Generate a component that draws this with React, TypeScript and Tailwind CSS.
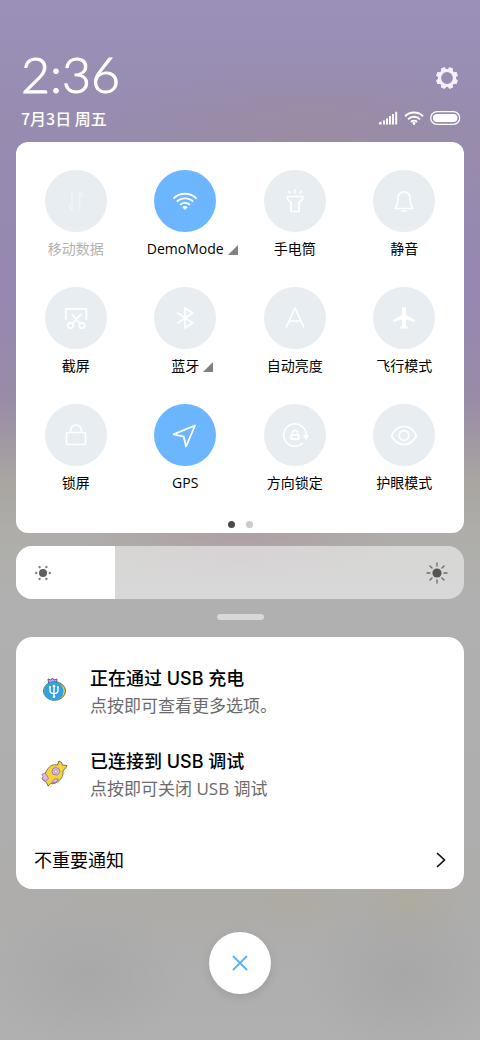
import React, { useState } from 'react';

interface Tile {
  id: string;
  label: string;
  icon: React.ReactNode;
  active?: boolean;
  disabled?: boolean;
  expandable?: boolean;
}

const Icon = ({ children, strokeWidth = 1.7 }: { children: React.ReactNode; strokeWidth?: number }) => (
  <svg
    width="30"
    height="30"
    viewBox="0 0 30 30"
    fill="none"
    stroke="#fff"
    strokeWidth={strokeWidth}
    strokeLinejoin="round"
    aria-hidden="true"
  >
    {children}
  </svg>
);

const TILES: Tile[] = [
  {
    id: 'data',
    label: '移动数据',
    disabled: true,
    icon: (
      <Icon strokeWidth={2.2}>
        <g opacity="0.35">
          <path d="M11 6v18l-3.500-4.500M18.500 24V6l3.500 4.500" />
        </g>
      </Icon>
    ),
  },
  {
    id: 'wifi',
    label: 'DemoMode',
    active: true,
    expandable: true,
    icon: (
      <Icon strokeWidth={1.8}>
        <path d="M3.500 12.500a16.300 16.300 0 0 1 23 0M6.800 15.700a11.600 11.600 0 0 1 16.400 0M10 18.900a7.100 7.100 0 0 1 10 0" />
        <path d="M12.300 21.300a3.800 3.800 0 0 1 5.400 0L15 24z" fill="#fff" stroke="none" />
      </Icon>
    ),
  },
  {
    id: 'torch',
    label: '手电筒',
    icon: (
      <Icon>
        <path d="M7.300 10.500h15.400v1.500c0 3-3.700 3-3.700 5.500v8h-8v-8c0-2.500-3.700-2.500-3.700-5.500zM15 3.500v4M8.500 5l2 2.500M21.500 5l-2 2.500" />
      </Icon>
    ),
  },
  {
    id: 'mute',
    label: '静音',
    icon: (
      <Icon>
        <path d="M6.200 22.500c1.800-2.500 2.600-4 2.600-7.500v-3a6.200 6.200 0 0 1 12.400 0v3c0 3.500.8 5 2.600 7.500zM12.300 25h5.400" />
      </Icon>
    ),
  },
  {
    id: 'screenshot',
    label: '截屏',
    icon: (
      <Icon>
        <path d="M4.800 17V5.800h20.600V17M10.500 11l8.500 9.500M20 11l-8.500 9.500" />
        <circle cx="9.500" cy="22.500" r="2.700" />
        <circle cx="21" cy="22.500" r="2.700" />
      </Icon>
    ),
  },
  {
    id: 'bluetooth',
    label: '蓝牙',
    expandable: true,
    icon: (
      <Icon>
        <path d="M7.500 9.800L22.500 20 15 25V5l7.500 5L7.500 20.200" />
      </Icon>
    ),
  },
  {
    id: 'brightness',
    label: '自动亮度',
    icon: (
      <Icon>
        <path d="M6 24.500L15 5l9 19.500M9 18h12" />
      </Icon>
    ),
  },
  {
    id: 'airplane',
    label: '飞行模式',
    icon: (
      <Icon>
        <path
          d="M15 4c1.300 0 2 1 2 2.300v5.500l8.700 5.200v2L17 16.500v6l1.800 1.700v1.400h-7.600v-1.400l1.800-1.700v-6L4.300 19v-2l8.700-5.200V6.300C13 5 13.700 4 15 4z"
          fill="#fff"
          stroke="none"
        />
      </Icon>
    ),
  },
  {
    id: 'lock',
    label: '锁屏',
    icon: (
      <Icon>
        <rect x="5.500" y="12.500" width="19" height="12" rx="1" />
        <path d="M9.500 12.500V10.500a5.500 5.500 0 0 1 11 0v2" />
      </Icon>
    ),
  },
  {
    id: 'gps',
    label: 'GPS',
    active: true,
    icon: (
      <Icon strokeWidth={1.8}>
        <path d="M25 5.500L3.500 14.300l10.300 2.400L16 26.500z" />
      </Icon>
    ),
  },
  {
    id: 'rotation',
    label: '方向锁定',
    icon: (
      <Icon strokeWidth={1.6}>
        <path d="M22.800 23a11.200 11.200 0 1 1 3.300-7" />
        <path d="M22.800 15h6.400L26 20z" fill="#fff" stroke="none" />
        <path d="M12.300 14.500v-1.300a2.700 2.700 0 0 1 5.400 0v1.300" />
        <path d="M10.300 14h9.400v6h-9.400zM12.300 16v2h5.400v-2z" fill="#fff" stroke="none" fillRule="evenodd" />
      </Icon>
    ),
  },
  {
    id: 'eye',
    label: '护眼模式',
    icon: (
      <Icon>
        <path d="M2.500 15.500C5.500 9.500 10 6.500 15 6.500s9.500 3 12.500 9c-3 6-7.500 9-12.500 9s-9.500-3-12.500-9z" />
        <circle cx="15" cy="15.500" r="4.800" />
      </Icon>
    ),
  },
];

const UsbChargeIcon = () => (
  <svg width="28" height="28" viewBox="0 0 28 28" aria-hidden="true">
    <path d="M8.500 7L8 3l3 1L12.500 2 14 4l3-1-.5 4z" fill="#c9a5dd" stroke="#54406b" strokeWidth="0.800" />
    <ellipse cx="14.500" cy="15" rx="11" ry="9.300" fill="#f0d34a" stroke="#5b5537" strokeWidth="0.900" />
    <ellipse cx="13.800" cy="15" rx="9.800" ry="9.500" fill="#2fa3e0" />
    <path
      d="M14 9.500V21M10 11v3.500c0 2 1.500 3 4 3s4-1 4-3V11"
      fill="none"
      stroke="#fff"
      strokeWidth="1.400"
    />
    <path d="M12.200 10.800L14 8.300l1.800 2.500zM9 12h2v-1.800H9zM17 12h2v-1.800h-2z" fill="#fff" />
    <circle cx="14" cy="20.700" r="1.300" fill="#fff" />
  </svg>
);

const UsbDebugIcon = () => (
  <svg width="28" height="28" viewBox="0 0 28 28" aria-hidden="true">
    <path
      d="M7 11c3-4.500 6.500-6 10.500-5L19 2l2.500 1.500 1 2.500 4.500.5-1.500 3-2.500 2c.5 4.500-1 8-5 11-2.500 2-5 2.500-7.500 2.200L8 27l-1.500-3.500L2 20l3-2.500c0-2.500.5-4.500 2-6.500z"
      fill="#f3d33f"
      stroke="#71643a"
      strokeWidth="0.900"
    />
    <path
      d="M1.800 15.500l3.200-1.500 2 2.500 1.500 3-3 2.500-3.500-2 1-2.500zM12 22.500l3.500-3 3 1-2.500 2.700-4 .8zM12 12.500l1-3 3-1 3 1.500 1 3-2.500 3-4.500-.5z"
      fill="#ddb8e5"
      stroke="#8b6493"
      strokeWidth="0.700"
    />
    <circle cx="15.800" cy="12.500" r="1.500" fill="#f9e8f6" stroke="#8b6493" strokeWidth="0.500" />
  </svg>
);

const NOTIFICATIONS = [
  { id: 'charge', title: '正在通过 USB 充电', text: '点按即可查看更多选项。', icon: <UsbChargeIcon /> },
  { id: 'debug', title: '已连接到 USB 调试', text: '点按即可关闭 USB 调试', icon: <UsbDebugIcon /> },
];

function StatusIcons() {
  return (
    <div className="flex items-center gap-1.5">
      <svg width="19" height="14" viewBox="0 0 19 14" fill="#fff" aria-hidden="true">
        <path d="M0 13.500v-2l2.500-1v3zM4 13.500v-4h2v4zM7 13.500V7.500h2v6zM10 13.500V5h2v8.500zM13 13.500V3h2v10.500zM16.200 13.500V.8h2v12.700z" />
      </svg>
      <svg width="20" height="14" viewBox="0 0 20 14" fill="none" stroke="#fff" strokeWidth="1.900" aria-hidden="true">
        <path d="M1 5.200a12.800 12.800 0 0 1 18 0M4 8.300a8.500 8.500 0 0 1 12 0M7 11a4.300 4.300 0 0 1 6 0" />
        <circle cx="10" cy="12.500" r="1.400" fill="#fff" stroke="none" />
      </svg>
      <svg width="31" height="14" viewBox="0 0 31 14" aria-hidden="true">
        <rect x="0.700" y="0.700" width="29" height="12.600" rx="6.300" fill="none" stroke="#fff" strokeWidth="1.300" />
        <rect x="3" y="3" width="24.400" height="8" rx="4" fill="#fff" />
      </svg>
    </div>
  );
}

function GearIcon() {
  return (
    <svg width="24" height="24" viewBox="-12 -12 24 24" fill="none" stroke="#f4f1f8" aria-hidden="true">
      <circle r="7.500" strokeWidth="3.200" />
      {[22.5, 67.5, 112.5, 157.5, 202.5, 247.5, 292.5, 337.5].map((a) => (
        <path
          key={a}
          d="M-2.300 -8L-1.500 -10.600H1.500L2.300 -8z"
          fill="#f4f1f8"
          strokeWidth="1"
          strokeLinejoin="round"
          transform={`rotate(${a})`}
        />
      ))}
    </svg>
  );
}

export default function App() {
  const [tiles, setTiles] = useState(TILES);
  const [brightness, setBrightness] = useState(22);

  const toggle = (id: string) =>
    setTiles((prev) => prev.map((t) => (t.id === id ? { ...t, active: !t.active } : t)));

  return (
    <main className="min-h-screen bg-[#b0b0b0] bg-[radial-gradient(ellipse_160px_50px_at_50%_530px,#b09ea4,transparent),radial-gradient(ellipse_100px_70px_at_18%_975px,#a8a8a8,transparent),radial-gradient(ellipse_100px_80px_at_84%_975px,#a7a7a8,transparent),radial-gradient(ellipse_60px_50px_at_85%_900px,#aeab9e,transparent),radial-gradient(ellipse_50px_30px_at_61%_902px,#aeaba0,transparent),radial-gradient(ellipse_320px_70px_at_45%_890px,#adaca7,transparent),radial-gradient(ellipse_220px_90px_at_65%_150px,#9a8da0,transparent),linear-gradient(#9b90b8_0px,#978bb0_130px,#9688b0_310px,#998ca6_400px,#a8a5a1_480px,#aeada9_530px,#b0b0b0_600px,#adadad_900px,#b0b0b0_1040px)] px-4 pb-[47px] font-['Open_Sans','Noto_Sans_CJK_SC',sans-serif] text-black">
      <header className="flex justify-between pt-[42px] pr-[3px] pl-[5px] text-white">
        <div>
          <time className="block h-16 font-['Lato',sans-serif] text-[50px] leading-[64px] font-light [-webkit-text-stroke:1px_white]">
            2:36
          </time>
          <p className="h-6 font-['Noto_Sans_CJK_SC',sans-serif] text-base leading-6 font-medium">7月3日 周五</p>
        </div>
        <div className="flex flex-col items-end justify-between pt-6 pb-[5px]">
          <button type="button" aria-label="设置" className="mr-0.5">
            <GearIcon />
          </button>
          <StatusIcons />
        </div>
      </header>

      <section className="mt-3 rounded-xl bg-white px-[5px] pt-7 pb-[5px]">
        <div className="grid grid-cols-4 gap-y-7">
          {tiles.map((t) => (
            <button
              key={t.id}
              type="button"
              disabled={t.disabled}
              aria-pressed={!!t.active}
              onClick={() => toggle(t.id)}
              className="flex flex-col items-center gap-[7px]"
            >
              <span
                className={
                  t.active
                    ? 'flex size-[62px] items-center justify-center rounded-full bg-[#6bb6ff]'
                    : 'flex size-[62px] items-center justify-center rounded-full bg-[#e7edf1]'
                }
              >
                {t.icon}
              </span>
              <span className={t.disabled ? 'text-sm text-[#b2b2b2]' : 'relative text-sm'}>
                {t.label}
                {t.expandable && (
                  <svg className="absolute top-1.5 left-full ml-1" width="10" height="10" viewBox="0 0 10 10" aria-hidden="true">
                    <path d="M10 0v10H0z" fill="#808080" />
                  </svg>
                )}
              </span>
            </button>
          ))}
        </div>
        <div className="mt-7 flex justify-center gap-[11px]">
          <span className="size-[7px] rounded-full bg-[#4c4c4c]" />
          <span className="size-[7px] rounded-full bg-[#cacaca]" />
        </div>
      </section>

      <label className="relative mt-[13px] flex h-[53px] items-center justify-between overflow-hidden rounded-2xl bg-white/50 px-4">
        <span className="absolute inset-y-0 left-0 bg-white" style={{ width: `${brightness}%` }} />
        <svg className="relative" width="22" height="22" viewBox="-11 -11 22 22" aria-hidden="true">
          <circle r="4" fill="#606060" />
          {[0, 60, 120, 180, 240, 300].map((a) => (
            <circle key={a} cx="6.800" r="1.200" fill="#808080" transform={`rotate(${a})`} />
          ))}
        </svg>
        <svg className="relative" width="22" height="22" viewBox="-11 -11 22 22" aria-hidden="true">
          <circle r="4.600" fill="#555" />
          {[0, 45, 90, 135, 180, 225, 270, 315].map((a) => (
            <path key={a} d="M7 0h3" stroke="#6c6c6c" strokeWidth="1.300" strokeLinecap="round" transform={`rotate(${a})`} />
          ))}
        </svg>
        <input
          type="range"
          min={0}
          max={100}
          value={brightness}
          onChange={(e) => setBrightness(Number(e.target.value))}
          aria-label="亮度"
          className="absolute inset-0 cursor-pointer opacity-0"
        />
      </label>

      <div className="mx-auto mt-[15px] h-1.5 w-[47px] rounded-sm bg-[#d8d8d8]" />

      <section className="mt-[17px] rounded-2xl bg-white pt-7">
        <ul className="flex flex-col gap-7">
          {NOTIFICATIONS.map((n) => (
            <li key={n.id} className="flex items-start gap-[22px] pt-px pl-6">
              <span className="pt-2.5">{n.icon}</span>
              <div>
                <h2 className="font-['Inter','Noto_Sans_CJK_SC',sans-serif] text-lg leading-[26px] font-medium">{n.title}</h2>
                <p className="text-[17px] leading-7 text-[#6b6b6b]">{n.text}</p>
              </div>
            </li>
          ))}
        </ul>
        <button type="button" className="mt-7 flex h-[58px] w-full items-center justify-between px-[18px] text-lg">
          不重要通知
          <svg width="10" height="16" viewBox="0 0 10 16" fill="none" stroke="#111" strokeWidth="1.700" aria-hidden="true">
            <path d="M1 1l7.500 7L1 15" />
          </svg>
        </button>
      </section>

      <button
        type="button"
        aria-label="清除全部"
        className="mx-auto mt-[43px] flex size-[62px] items-center justify-center rounded-full bg-white shadow-[0_3px_10px_rgba(0,0,0,0.1)]"
      >
        <svg width="16" height="16" viewBox="0 0 16 16" stroke="#61b2fc" strokeWidth="2" strokeLinecap="round" aria-hidden="true">
          <path d="M1.500 1.500l13 13M14.500 1.500l-13 13" />
        </svg>
      </button>
    </main>
  );
}
